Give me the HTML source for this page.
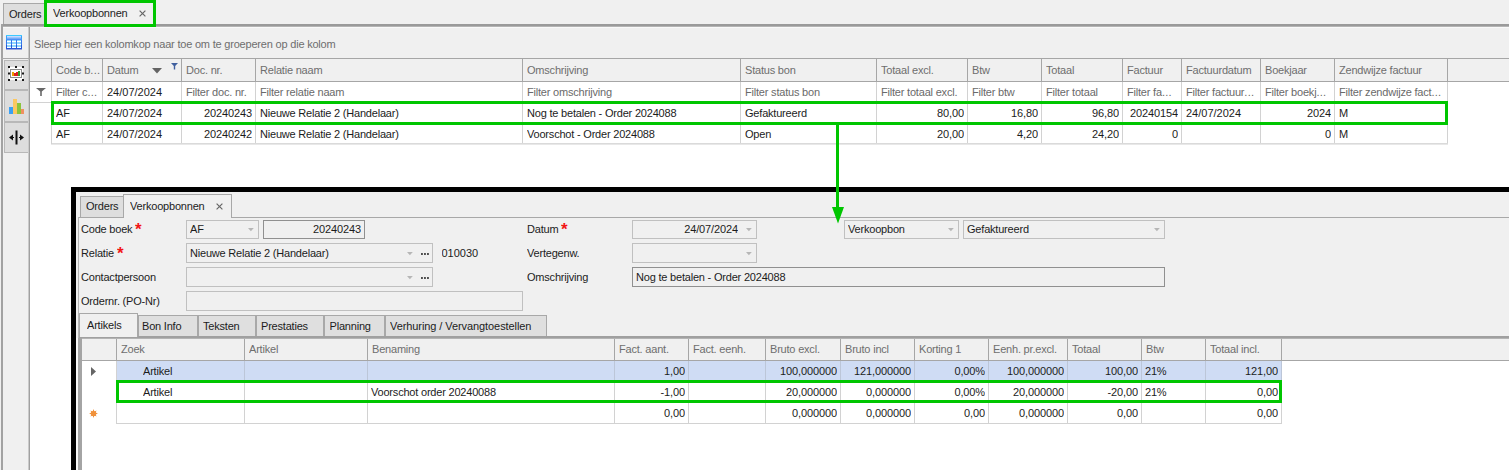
<!DOCTYPE html>
<html lang="nl"><head><meta charset="utf-8"><title>Verkoopbonnen</title>
<style>
html,body{margin:0;padding:0}
body{width:1509px;height:470px;overflow:hidden;background:#f0f0f0;position:relative;
 font-family:"Liberation Sans",sans-serif;font-size:11px;color:#1c1c1c}
div{position:absolute;box-sizing:border-box;white-space:nowrap;overflow:hidden}
.t{letter-spacing:-0.2px}
.h{letter-spacing:-0.2px;color:#6e6e6e}
.f{letter-spacing:-0.2px;color:#6a6a6a}
.n{text-align:right;letter-spacing:-0.12px}
.d{}
.e{letter-spacing:0.3px}
.s{color:#f21616;font-size:17px;font-weight:bold;line-height:17px;width:9px;height:12px;letter-spacing:0}
svg{position:absolute;overflow:visible}
</style></head>
<body>
<div style="left:3px;top:3px;width:42px;height:22px;background:#dedede;border:1px solid #a8a8a8;border-bottom:none"></div>
<div class="t" style="left:9px;top:4px;width:40px;height:21px;line-height:21px;">Orders</div>
<div style="left:1px;top:24px;width:1508px;height:2px;background:#9a9a9a"></div>
<div style="left:1px;top:26px;width:1508px;height:1px;background:#b4b4b4"></div>
<div style="left:3px;top:27px;width:1506px;height:1px;background:#f9f9f9"></div>
<div style="left:47px;top:3px;width:107px;height:22px;background:#f0f0f0"></div>
<div class="t" style="left:53px;top:3px;width:80px;height:21px;line-height:21px;">Verkoopbonnen</div>
<svg style="left:139px;top:10px" width="7" height="7" viewBox="0 0 7 7"><path d="M0.6 0.6L6.4 6.4M6.4 0.6L0.6 6.4" stroke="#666" stroke-width="1.15" fill="none"/></svg>
<div style="left:44px;top:0px;width:112px;height:27px;border:3px solid #00c600"></div>
<div style="left:1px;top:24px;width:2px;height:446px;background:#a2a2a2"></div>
<div style="left:28px;top:27px;width:1px;height:443px;background:#cacaca"></div>
<div style="left:29px;top:27px;width:1px;height:443px;background:#a0a0a0"></div>
<svg style="left:6px;top:35px" width="16" height="15" viewBox="0 0 16 15">
<rect x="0" y="14" width="16" height="1" fill="#98a4dc"/>
<rect x="0" y="0" width="16" height="1" fill="#3ccaff"/>
<rect x="0" y="1" width="16" height="4" fill="#3c9cf8"/>
<rect x="0" y="5" width="16" height="5" fill="#3678ea"/>
<rect x="0" y="10" width="16" height="4" fill="#2858d6"/>
<rect x="1" y="1" width="14" height="1" fill="#c4dcff"/><rect x="1" y="2" width="14" height="1" fill="#9cc4fc"/><rect x="1" y="3" width="14" height="1" fill="#74acf8"/><rect x="1" y="4" width="14" height="1" fill="#4c90f6"/>
<g fill="#90d6ff"><rect x="1" y="5" width="4" height="8"/><rect x="6" y="5" width="4" height="8"/><rect x="11" y="5" width="4" height="8"/></g>
<g fill="#ffffff"><rect x="1" y="6" width="4" height="1"/><rect x="6" y="6" width="4" height="1"/><rect x="11" y="6" width="4" height="1"/>
<rect x="1" y="9" width="4" height="1"/><rect x="6" y="9" width="4" height="1"/><rect x="11" y="9" width="4" height="1"/>
<rect x="1" y="12" width="4" height="1"/><rect x="6" y="12" width="4" height="1"/><rect x="11" y="12" width="4" height="1"/></g></svg>
<div style="left:1px;top:58px;width:29px;height:1px;background:#a8a8a8"></div>
<div style="left:4px;top:60px;width:24px;height:30px;background:#dddddd;border:1px solid #b8b8b8;border-right:none"></div>
<div style="left:4px;top:90px;width:24px;height:32px;background:#dddddd;border:1px solid #b8b8b8;border-right:none"></div>
<div style="left:4px;top:122px;width:24px;height:31px;background:#dddddd;border:1px solid #b8b8b8;border-right:none"></div>
<svg style="left:8px;top:66px" width="16" height="15" viewBox="0 0 16 15">
<rect x="1" y="1" width="14" height="13" fill="#fff"/>
<g fill="#1a1a1a"><rect x="0" y="0" width="2" height="2"/><rect x="7" y="0" width="2" height="2"/><rect x="14" y="0" width="2" height="2"/>
<rect x="0" y="6.5" width="2" height="2"/><rect x="14" y="6.5" width="2" height="2"/>
<rect x="0" y="13" width="2" height="2"/><rect x="7" y="13" width="2" height="2"/><rect x="14" y="13" width="2" height="2"/></g>
<rect x="2.5" y="3.5" width="11" height="8" fill="#fff" stroke="#8c8c8c"/>
<rect x="4" y="6" width="2" height="4" fill="#e8a000"/><rect x="6" y="7" width="2" height="3" fill="#e02020"/><rect x="8" y="6" width="2" height="4" fill="#e02020"/><rect x="10" y="5" width="2" height="5" fill="#30a030"/></svg>
<svg style="left:9px;top:98px" width="16" height="16" viewBox="0 0 16 16">
<rect x="0" y="9" width="4" height="7" fill="#3aa0f4"/><rect x="4" y="1" width="4" height="15" fill="#fcc860"/><rect x="8" y="5" width="4" height="11" fill="#8cc43c"/><rect x="12" y="11" width="3" height="5" fill="#f09060"/></svg>
<svg style="left:9px;top:130px" width="15" height="15" viewBox="0 0 15 15">
<rect x="6.5" y="0.5" width="2" height="14" fill="#111"/><path d="M0 7.5L4 4.5V10.5Z M15 7.5L11 4.5V10.5Z" fill="#111"/><rect x="3" y="7" width="2" height="1" fill="#111"/><rect x="10" y="7" width="2" height="1" fill="#111"/></svg>
<div class="h" style="left:34px;top:33px;width:400px;height:22px;line-height:22px;">Sleep hier een kolomkop naar toe om te groeperen op die kolom</div>
<div style="left:30px;top:82px;width:1479px;height:388px;background:#fff"></div>
<div style="left:30px;top:58px;width:1479px;height:1px;background:#a6a6a6"></div>
<div style="left:30px;top:81px;width:1479px;height:1px;background:#a6a6a6"></div>
<div style="left:51px;top:59px;width:1px;height:22px;background:#a6a6a6"></div>
<div style="left:51px;top:82px;width:1px;height:62px;background:#d2d2d2"></div>
<div style="left:102px;top:59px;width:1px;height:22px;background:#a6a6a6"></div>
<div style="left:102px;top:82px;width:1px;height:62px;background:#d2d2d2"></div>
<div class="h" style="left:56px;top:59px;width:46px;height:22px;line-height:22px;">Code b<span class="e">...</span></div>
<div class="f" style="left:56px;top:82px;width:46px;height:20px;line-height:20px;">Filter c<span class="e">...</span></div>
<div class="t" style="left:56px;top:103px;width:46px;height:20px;line-height:20px;">AF</div>
<div class="t" style="left:56px;top:124px;width:46px;height:20px;line-height:20px;">AF</div>
<div style="left:181px;top:59px;width:1px;height:22px;background:#a6a6a6"></div>
<div style="left:181px;top:82px;width:1px;height:62px;background:#d2d2d2"></div>
<div class="h" style="left:107px;top:59px;width:74px;height:22px;line-height:22px;">Datum</div>
<div class="d" style="left:107px;top:103px;width:74px;height:20px;line-height:20px;">24/07/2024</div>
<div class="d" style="left:107px;top:124px;width:74px;height:20px;line-height:20px;">24/07/2024</div>
<div style="left:255px;top:59px;width:1px;height:22px;background:#a6a6a6"></div>
<div style="left:255px;top:82px;width:1px;height:62px;background:#d2d2d2"></div>
<div class="h" style="left:186px;top:59px;width:69px;height:22px;line-height:22px;">Doc. nr.</div>
<div class="f" style="left:186px;top:82px;width:69px;height:20px;line-height:20px;">Filter doc. nr.</div>
<div class="d n" style="left:182px;top:103px;width:70px;height:20px;line-height:20px;">20240243</div>
<div class="d n" style="left:182px;top:124px;width:70px;height:20px;line-height:20px;">20240242</div>
<div style="left:522px;top:59px;width:1px;height:22px;background:#a6a6a6"></div>
<div style="left:522px;top:82px;width:1px;height:62px;background:#d2d2d2"></div>
<div class="h" style="left:260px;top:59px;width:262px;height:22px;line-height:22px;">Relatie naam</div>
<div class="f" style="left:260px;top:82px;width:262px;height:20px;line-height:20px;">Filter relatie naam</div>
<div class="t" style="left:260px;top:103px;width:262px;height:20px;line-height:20px;">Nieuwe Relatie 2 (Handelaar)</div>
<div class="t" style="left:260px;top:124px;width:262px;height:20px;line-height:20px;">Nieuwe Relatie 2 (Handelaar)</div>
<div style="left:740px;top:59px;width:1px;height:22px;background:#a6a6a6"></div>
<div style="left:740px;top:82px;width:1px;height:62px;background:#d2d2d2"></div>
<div class="h" style="left:527px;top:59px;width:213px;height:22px;line-height:22px;">Omschrijving</div>
<div class="f" style="left:527px;top:82px;width:213px;height:20px;line-height:20px;">Filter omschrijving</div>
<div class="t" style="left:527px;top:103px;width:213px;height:20px;line-height:20px;">Nog te betalen - Order 2024088</div>
<div class="t" style="left:527px;top:124px;width:213px;height:20px;line-height:20px;">Voorschot - Order 2024088</div>
<div style="left:876px;top:59px;width:1px;height:22px;background:#a6a6a6"></div>
<div style="left:876px;top:82px;width:1px;height:62px;background:#d2d2d2"></div>
<div class="h" style="left:745px;top:59px;width:131px;height:22px;line-height:22px;">Status bon</div>
<div class="f" style="left:745px;top:82px;width:131px;height:20px;line-height:20px;">Filter status bon</div>
<div class="t" style="left:745px;top:103px;width:131px;height:20px;line-height:20px;">Gefaktureerd</div>
<div class="t" style="left:745px;top:124px;width:131px;height:20px;line-height:20px;">Open</div>
<div style="left:967px;top:59px;width:1px;height:22px;background:#a6a6a6"></div>
<div style="left:967px;top:82px;width:1px;height:62px;background:#d2d2d2"></div>
<div class="h" style="left:881px;top:59px;width:86px;height:22px;line-height:22px;">Totaal excl.</div>
<div class="f" style="left:881px;top:82px;width:86px;height:20px;line-height:20px;">Filter totaal excl.</div>
<div class="d n" style="left:877px;top:103px;width:87px;height:20px;line-height:20px;">80,00</div>
<div class="d n" style="left:877px;top:124px;width:87px;height:20px;line-height:20px;">20,00</div>
<div style="left:1041px;top:59px;width:1px;height:22px;background:#a6a6a6"></div>
<div style="left:1041px;top:82px;width:1px;height:62px;background:#d2d2d2"></div>
<div class="h" style="left:972px;top:59px;width:69px;height:22px;line-height:22px;">Btw</div>
<div class="f" style="left:972px;top:82px;width:69px;height:20px;line-height:20px;">Filter btw</div>
<div class="d n" style="left:968px;top:103px;width:70px;height:20px;line-height:20px;">16,80</div>
<div class="d n" style="left:968px;top:124px;width:70px;height:20px;line-height:20px;">4,20</div>
<div style="left:1122px;top:59px;width:1px;height:22px;background:#a6a6a6"></div>
<div style="left:1122px;top:82px;width:1px;height:62px;background:#d2d2d2"></div>
<div class="h" style="left:1046px;top:59px;width:76px;height:22px;line-height:22px;">Totaal</div>
<div class="f" style="left:1046px;top:82px;width:76px;height:20px;line-height:20px;">Filter totaal</div>
<div class="d n" style="left:1042px;top:103px;width:77px;height:20px;line-height:20px;">96,80</div>
<div class="d n" style="left:1042px;top:124px;width:77px;height:20px;line-height:20px;">24,20</div>
<div style="left:1181px;top:59px;width:1px;height:22px;background:#a6a6a6"></div>
<div style="left:1181px;top:82px;width:1px;height:62px;background:#d2d2d2"></div>
<div class="h" style="left:1127px;top:59px;width:54px;height:22px;line-height:22px;">Factuur</div>
<div class="f" style="left:1127px;top:82px;width:54px;height:20px;line-height:20px;">Filter fa<span class="e">...</span></div>
<div class="d n" style="left:1123px;top:103px;width:55px;height:20px;line-height:20px;">20240154</div>
<div class="d n" style="left:1123px;top:124px;width:55px;height:20px;line-height:20px;">0</div>
<div style="left:1260px;top:59px;width:1px;height:22px;background:#a6a6a6"></div>
<div style="left:1260px;top:82px;width:1px;height:62px;background:#d2d2d2"></div>
<div class="h" style="left:1186px;top:59px;width:74px;height:22px;line-height:22px;">Factuurdatum</div>
<div class="f" style="left:1186px;top:82px;width:74px;height:20px;line-height:20px;">Filter factuur<span class="e">...</span></div>
<div class="d" style="left:1186px;top:103px;width:74px;height:20px;line-height:20px;">24/07/2024</div>
<div style="left:1334px;top:59px;width:1px;height:22px;background:#a6a6a6"></div>
<div style="left:1334px;top:82px;width:1px;height:62px;background:#d2d2d2"></div>
<div class="h" style="left:1265px;top:59px;width:69px;height:22px;line-height:22px;">Boekjaar</div>
<div class="f" style="left:1265px;top:82px;width:69px;height:20px;line-height:20px;">Filter boekj<span class="e">...</span></div>
<div class="d n" style="left:1261px;top:103px;width:70px;height:20px;line-height:20px;">2024</div>
<div class="d n" style="left:1261px;top:124px;width:70px;height:20px;line-height:20px;">0</div>
<div style="left:1447px;top:59px;width:1px;height:22px;background:#a6a6a6"></div>
<div style="left:1447px;top:82px;width:1px;height:62px;background:#d2d2d2"></div>
<div class="h" style="left:1339px;top:59px;width:108px;height:22px;line-height:22px;">Zendwijze factuur</div>
<div class="f" style="left:1339px;top:82px;width:108px;height:20px;line-height:20px;">Filter zendwijze fact<span class="e">...</span></div>
<div class="t" style="left:1339px;top:103px;width:108px;height:20px;line-height:20px;">M</div>
<div class="t" style="left:1339px;top:124px;width:108px;height:20px;line-height:20px;">M</div>
<div class="d" style="left:107px;top:82px;width:74px;height:20px;line-height:20px;">24/07/2024</div>
<div style="left:30px;top:102px;width:1418px;height:1px;background:#d2d2d2"></div>
<div style="left:51px;top:123px;width:1397px;height:1px;background:#d2d2d2"></div>
<div style="left:51px;top:144px;width:1397px;height:1px;background:#e8e8e8"></div>
<div style="left:51px;top:143px;width:1397px;height:1px;background:#dadada"></div>
<div style="left:51px;top:82px;width:1px;height:62px;background:#d2d2d2"></div>
<svg style="left:152px;top:68px" width="10" height="5.4" viewBox="0 0 10 5.4"><path d="M0 0H10L5 5.4Z" fill="#646464"/></svg>
<svg style="left:171px;top:63px" width="7" height="7" viewBox="0 0 7 7"><path d="M0 0H7L4.2 3V6.6H2.8V3Z" fill="#40609f"/></svg>
<svg style="left:36px;top:88px" width="10" height="8" viewBox="0 0 10 8"><path d="M0 0H10L5.8 3.6V8H4.2V3.6Z" fill="#686868"/></svg>
<div style="left:51px;top:101px;width:1397px;height:24px;border:3px solid #00c600"></div>
<div style="left:71px;top:187px;width:1438px;height:283px;background:#f0f0f0;border-left:5px solid #000;border-top:5px solid #000"></div>
<div style="left:80px;top:196px;width:44px;height:22px;background:#dedede;border:1px solid #a8a8a8;border-bottom:none"></div>
<div class="t" style="left:86px;top:196px;width:40px;height:21px;line-height:21px;">Orders</div>
<div style="left:78px;top:217px;width:1431px;height:1px;background:#a8a8a8"></div>
<div style="left:78px;top:217px;width:1px;height:253px;background:#b4b4b4"></div>
<div style="left:123px;top:194px;width:109px;height:24px;background:#f0f0f0;border:1px solid #a8a8a8;border-bottom:none"></div>
<div class="t" style="left:130px;top:195px;width:80px;height:22px;line-height:22px;">Verkoopbonnen</div>
<svg style="left:216px;top:202.5px" width="7" height="7" viewBox="0 0 7 7"><path d="M0.6 0.6L6.4 6.4M6.4 0.6L0.6 6.4" stroke="#666" stroke-width="1.15" fill="none"/></svg>
<div class="t" style="left:81px;top:220px;width:100px;height:19px;line-height:19px;">Code boek</div>
<div class="s" style="left:135px;top:221px">*</div>
<div style="left:186px;top:220px;width:73px;height:19px;border:1px solid #c0c0c0;background:#f0f0f0"></div>
<svg style="left:248.0px;top:228.4px" width="5.8" height="3.3" viewBox="0 0 5.8 3.3"><path d="M0 0H5.8L2.9 3.3Z" fill="#b6b6b6"/></svg>
<div class="t" style="left:190px;top:220px;width:65px;height:19px;line-height:19px;">AF</div>
<div style="left:263px;top:220px;width:102px;height:19px;border:1px solid #909090;background:#f0f0f0"></div>
<div class="d n" style="left:263px;top:220px;width:98px;height:19px;line-height:19px;">20240243</div>
<div class="t" style="left:81px;top:244px;width:100px;height:19px;line-height:19px;">Relatie</div>
<div class="s" style="left:117px;top:245px">*</div>
<div style="left:186px;top:243px;width:247px;height:20px;border:1px solid #c0c0c0;background:#f0f0f0"></div>
<svg style="left:421.4px;top:252.6px" width="8" height="2" viewBox="0 0 8 2"><rect x="0" y="0" width="1.9" height="2" fill="#505050"/><rect x="3" y="0" width="1.9" height="2" fill="#505050"/><rect x="6" y="0" width="1.9" height="2" fill="#505050"/></svg>
<svg style="left:407.4px;top:252.1px" width="5.8" height="3.3" viewBox="0 0 5.8 3.3"><path d="M0 0H5.8L2.9 3.3Z" fill="#b6b6b6"/></svg>
<div class="t" style="left:190px;top:243px;width:239px;height:20px;line-height:20px;">Nieuwe Relatie 2 (Handelaar)</div>
<div class="d" style="left:441.5px;top:244px;width:60px;height:19px;line-height:19px;">010030</div>
<div class="t" style="left:81px;top:267px;width:100px;height:20px;line-height:20px;">Contactpersoon</div>
<div style="left:186px;top:267px;width:247px;height:20px;border:1px solid #c0c0c0;background:#f0f0f0"></div>
<svg style="left:421.4px;top:276.6px" width="8" height="2" viewBox="0 0 8 2"><rect x="0" y="0" width="1.9" height="2" fill="#505050"/><rect x="3" y="0" width="1.9" height="2" fill="#505050"/><rect x="6" y="0" width="1.9" height="2" fill="#505050"/></svg>
<svg style="left:407.4px;top:276.1px" width="5.8" height="3.3" viewBox="0 0 5.8 3.3"><path d="M0 0H5.8L2.9 3.3Z" fill="#b6b6b6"/></svg>
<div class="t" style="left:81px;top:291px;width:100px;height:20px;line-height:20px;">Ordernr. (PO-Nr)</div>
<div style="left:186px;top:291px;width:337px;height:20px;border:1px solid #c0c0c0;background:#f0f0f0"></div>
<div class="t" style="left:527px;top:220px;width:100px;height:19px;line-height:19px;">Datum</div>
<div class="s" style="left:561px;top:221px">*</div>
<div style="left:632px;top:220px;width:125px;height:19px;border:1px solid #c0c0c0;background:#f0f0f0"></div>
<svg style="left:746.0px;top:228.4px" width="5.8" height="3.3" viewBox="0 0 5.8 3.3"><path d="M0 0H5.8L2.9 3.3Z" fill="#b6b6b6"/></svg>
<div class="d n" style="left:632px;top:220px;width:106px;height:19px;line-height:19px;">24/07/2024</div>
<div class="t" style="left:527px;top:244px;width:100px;height:19px;line-height:19px;">Vertegenw.</div>
<div style="left:632px;top:243px;width:125px;height:20px;border:1px solid #c0c0c0;background:#f0f0f0"></div>
<svg style="left:746.0px;top:252.1px" width="5.8" height="3.3" viewBox="0 0 5.8 3.3"><path d="M0 0H5.8L2.9 3.3Z" fill="#b6b6b6"/></svg>
<div class="t" style="left:527px;top:267px;width:100px;height:20px;line-height:20px;">Omschrijving</div>
<div style="left:632px;top:267px;width:533px;height:20px;border:1px solid #909090;background:#f0f0f0"></div>
<div class="t" style="left:636px;top:267px;width:525px;height:20px;line-height:20px;">Nog te betalen - Order 2024088</div>
<div style="left:844px;top:220px;width:115px;height:19px;border:1px solid #c0c0c0;background:#f0f0f0"></div>
<svg style="left:948.0px;top:228.4px" width="5.8" height="3.3" viewBox="0 0 5.8 3.3"><path d="M0 0H5.8L2.9 3.3Z" fill="#b6b6b6"/></svg>
<div class="t" style="left:848px;top:220px;width:107px;height:19px;line-height:19px;">Verkoopbon</div>
<div style="left:963px;top:220px;width:202px;height:19px;border:1px solid #c0c0c0;background:#f0f0f0"></div>
<svg style="left:1154.0px;top:228.4px" width="5.8" height="3.3" viewBox="0 0 5.8 3.3"><path d="M0 0H5.8L2.9 3.3Z" fill="#b6b6b6"/></svg>
<div class="t" style="left:967px;top:220px;width:194px;height:19px;line-height:19px;">Gefaktureerd</div>
<div style="left:138px;top:315px;width:60px;height:22px;background:#dfdfdf;border:1px solid #a8a8a8;border-bottom:none"></div>
<div class="t" style="left:142px;top:316px;width:59px;height:20px;line-height:20px;letter-spacing:-0.2px">Bon Info</div>
<div style="left:198px;top:315px;width:58px;height:22px;background:#dfdfdf;border:1px solid #a8a8a8;border-bottom:none"></div>
<div class="t" style="left:203px;top:316px;width:57px;height:20px;line-height:20px;letter-spacing:-0.2px">Teksten</div>
<div style="left:256px;top:315px;width:68px;height:22px;background:#dfdfdf;border:1px solid #a8a8a8;border-bottom:none"></div>
<div class="t" style="left:261px;top:316px;width:67px;height:20px;line-height:20px;letter-spacing:-0.2px">Prestaties</div>
<div style="left:324px;top:315px;width:61px;height:22px;background:#dfdfdf;border:1px solid #a8a8a8;border-bottom:none"></div>
<div class="t" style="left:329.5px;top:316px;width:60px;height:20px;line-height:20px;letter-spacing:-0.2px">Planning</div>
<div style="left:385px;top:315px;width:162px;height:22px;background:#dfdfdf;border:1px solid #a8a8a8;border-bottom:none"></div>
<div class="t" style="left:390px;top:316px;width:161px;height:20px;line-height:20px;letter-spacing:-0.08px">Verhuring / Vervangtoestellen</div>
<div style="left:79px;top:336px;width:1430px;height:2px;background:#a0a0a0"></div>
<div style="left:79px;top:338px;width:1430px;height:1px;background:#b4b4b4"></div>
<div style="left:79px;top:313px;width:59px;height:24px;background:#f0f0f0;border:1px solid #a8a8a8;border-bottom:none"></div>
<div class="t" style="left:87px;top:314px;width:50px;height:22px;line-height:22px;">Artikels</div>
<div style="left:78px;top:338px;width:4px;height:132px;background:#a4a4a4"></div>
<div style="left:76px;top:338px;width:2px;height:132px;background:#f8f8f8"></div>
<div style="left:82px;top:361px;width:1427px;height:109px;background:#fff"></div>
<div style="left:82px;top:360px;width:1427px;height:1px;background:#a6a6a6"></div>
<div style="left:117px;top:361px;width:1165px;height:20px;background:#cfdcf4"></div>
<div style="left:116px;top:339px;width:1px;height:21px;background:#a6a6a6"></div>
<div style="left:244px;top:339px;width:1px;height:21px;background:#a6a6a6"></div>
<div style="left:244px;top:361px;width:1px;height:62px;background:#d2d2d2"></div>
<div style="left:244px;top:361px;width:1px;height:20px;background:#bcc6d8"></div>
<div class="h" style="left:121px;top:339px;width:123px;height:21px;line-height:21px;">Zoek</div>
<div class="t" style="left:143px;top:361px;width:101px;height:20px;line-height:20px;">Artikel</div>
<div class="t" style="left:143px;top:382px;width:101px;height:20px;line-height:20px;">Artikel</div>
<div style="left:367px;top:339px;width:1px;height:21px;background:#a6a6a6"></div>
<div style="left:367px;top:361px;width:1px;height:62px;background:#d2d2d2"></div>
<div style="left:367px;top:361px;width:1px;height:20px;background:#bcc6d8"></div>
<div class="h" style="left:249px;top:339px;width:118px;height:21px;line-height:21px;">Artikel</div>
<div style="left:614px;top:339px;width:1px;height:21px;background:#a6a6a6"></div>
<div style="left:614px;top:361px;width:1px;height:62px;background:#d2d2d2"></div>
<div style="left:614px;top:361px;width:1px;height:20px;background:#bcc6d8"></div>
<div class="h" style="left:372px;top:339px;width:242px;height:21px;line-height:21px;">Benaming</div>
<div class="t" style="left:371px;top:382px;width:243px;height:20px;line-height:20px;">Voorschot order 20240088</div>
<div style="left:688px;top:339px;width:1px;height:21px;background:#a6a6a6"></div>
<div style="left:688px;top:361px;width:1px;height:62px;background:#d2d2d2"></div>
<div style="left:688px;top:361px;width:1px;height:20px;background:#bcc6d8"></div>
<div class="h" style="left:619px;top:339px;width:69px;height:21px;line-height:21px;">Fact. aant.</div>
<div class="d n" style="left:615px;top:361px;width:70px;height:20px;line-height:20px;">1,00</div>
<div class="d n" style="left:615px;top:382px;width:70px;height:20px;line-height:20px;">-1,00</div>
<div class="d n" style="left:615px;top:403px;width:70px;height:20px;line-height:20px;">0,00</div>
<div style="left:765px;top:339px;width:1px;height:21px;background:#a6a6a6"></div>
<div style="left:765px;top:361px;width:1px;height:62px;background:#d2d2d2"></div>
<div style="left:765px;top:361px;width:1px;height:20px;background:#bcc6d8"></div>
<div class="h" style="left:693px;top:339px;width:72px;height:21px;line-height:21px;">Fact. eenh.</div>
<div style="left:840px;top:339px;width:1px;height:21px;background:#a6a6a6"></div>
<div style="left:840px;top:361px;width:1px;height:62px;background:#d2d2d2"></div>
<div style="left:840px;top:361px;width:1px;height:20px;background:#bcc6d8"></div>
<div class="h" style="left:770px;top:339px;width:70px;height:21px;line-height:21px;">Bruto excl.</div>
<div class="d n" style="left:766px;top:361px;width:71px;height:20px;line-height:20px;">100,000000</div>
<div class="d n" style="left:766px;top:382px;width:71px;height:20px;line-height:20px;">20,000000</div>
<div class="d n" style="left:766px;top:403px;width:71px;height:20px;line-height:20px;">0,000000</div>
<div style="left:914px;top:339px;width:1px;height:21px;background:#a6a6a6"></div>
<div style="left:914px;top:361px;width:1px;height:62px;background:#d2d2d2"></div>
<div style="left:914px;top:361px;width:1px;height:20px;background:#bcc6d8"></div>
<div class="h" style="left:845px;top:339px;width:69px;height:21px;line-height:21px;">Bruto incl</div>
<div class="d n" style="left:841px;top:361px;width:70px;height:20px;line-height:20px;">121,000000</div>
<div class="d n" style="left:841px;top:382px;width:70px;height:20px;line-height:20px;">0,000000</div>
<div class="d n" style="left:841px;top:403px;width:70px;height:20px;line-height:20px;">0,000000</div>
<div style="left:988px;top:339px;width:1px;height:21px;background:#a6a6a6"></div>
<div style="left:988px;top:361px;width:1px;height:62px;background:#d2d2d2"></div>
<div style="left:988px;top:361px;width:1px;height:20px;background:#bcc6d8"></div>
<div class="h" style="left:919px;top:339px;width:69px;height:21px;line-height:21px;">Korting 1</div>
<div class="d n" style="left:915px;top:361px;width:70px;height:20px;line-height:20px;">0,00%</div>
<div class="d n" style="left:915px;top:382px;width:70px;height:20px;line-height:20px;">0,00%</div>
<div class="d n" style="left:915px;top:403px;width:70px;height:20px;line-height:20px;">0,00</div>
<div style="left:1067px;top:339px;width:1px;height:21px;background:#a6a6a6"></div>
<div style="left:1067px;top:361px;width:1px;height:62px;background:#d2d2d2"></div>
<div style="left:1067px;top:361px;width:1px;height:20px;background:#bcc6d8"></div>
<div class="h" style="left:993px;top:339px;width:74px;height:21px;line-height:21px;">Eenh. pr.excl.</div>
<div class="d n" style="left:989px;top:361px;width:75px;height:20px;line-height:20px;">100,000000</div>
<div class="d n" style="left:989px;top:382px;width:75px;height:20px;line-height:20px;">20,000000</div>
<div class="d n" style="left:989px;top:403px;width:75px;height:20px;line-height:20px;">0,000000</div>
<div style="left:1141px;top:339px;width:1px;height:21px;background:#a6a6a6"></div>
<div style="left:1141px;top:361px;width:1px;height:62px;background:#d2d2d2"></div>
<div style="left:1141px;top:361px;width:1px;height:20px;background:#bcc6d8"></div>
<div class="h" style="left:1072px;top:339px;width:69px;height:21px;line-height:21px;">Totaal</div>
<div class="d n" style="left:1068px;top:361px;width:70px;height:20px;line-height:20px;">100,00</div>
<div class="d n" style="left:1068px;top:382px;width:70px;height:20px;line-height:20px;">-20,00</div>
<div class="d n" style="left:1068px;top:403px;width:70px;height:20px;line-height:20px;">0,00</div>
<div style="left:1205px;top:339px;width:1px;height:21px;background:#a6a6a6"></div>
<div style="left:1205px;top:361px;width:1px;height:62px;background:#d2d2d2"></div>
<div style="left:1205px;top:361px;width:1px;height:20px;background:#bcc6d8"></div>
<div class="h" style="left:1146px;top:339px;width:59px;height:21px;line-height:21px;">Btw</div>
<div class="t" style="left:1145px;top:361px;width:60px;height:20px;line-height:20px;">21%</div>
<div class="t" style="left:1145px;top:382px;width:60px;height:20px;line-height:20px;">21%</div>
<div style="left:1281px;top:339px;width:1px;height:21px;background:#a6a6a6"></div>
<div style="left:1281px;top:361px;width:1px;height:62px;background:#d2d2d2"></div>
<div style="left:1281px;top:361px;width:1px;height:20px;background:#bcc6d8"></div>
<div class="h" style="left:1210px;top:339px;width:71px;height:21px;line-height:21px;">Totaal incl.</div>
<div class="d n" style="left:1206px;top:361px;width:72px;height:20px;line-height:20px;">121,00</div>
<div class="d n" style="left:1206px;top:382px;width:72px;height:20px;line-height:20px;">0,00</div>
<div class="d n" style="left:1206px;top:403px;width:72px;height:20px;line-height:20px;">0,00</div>
<div style="left:116px;top:361px;width:1px;height:62px;background:#d2d2d2"></div>
<div style="left:116px;top:381px;width:1166px;height:1px;background:#d2d2d2"></div>
<div style="left:116px;top:402px;width:1166px;height:1px;background:#d2d2d2"></div>
<div style="left:116px;top:423px;width:1166px;height:1px;background:#d2d2d2"></div>
<svg style="left:91px;top:367px" width="5" height="9" viewBox="0 0 5 9"><path d="M0 0L5 4.5L0 9Z" fill="#666"/></svg>
<svg style="left:88.6px;top:408.5px" width="9" height="9" viewBox="0 0 9 9"><polygon points="4.50,0.10 5.38,2.38 7.61,1.39 6.62,3.62 8.90,4.50 6.62,5.38 7.61,7.61 5.38,6.62 4.50,8.90 3.62,6.62 1.39,7.61 2.38,5.38 0.10,4.50 2.38,3.62 1.39,1.39 3.62,2.38" fill="#f0913a"/><circle cx="4.5" cy="4.5" r="2.6" fill="#f0913a"/></svg>
<div style="left:116px;top:380px;width:1166px;height:23px;border:3px solid #00c600"></div>
<div style="left:836px;top:124px;width:3px;height:84px;background:#00c600"></div>
<svg style="left:831.5px;top:206.5px" width="12" height="16.5" viewBox="0 0 12 16.5"><path d="M0 0H12L6 16.5Z" fill="#00c600"/></svg>
</body></html>
